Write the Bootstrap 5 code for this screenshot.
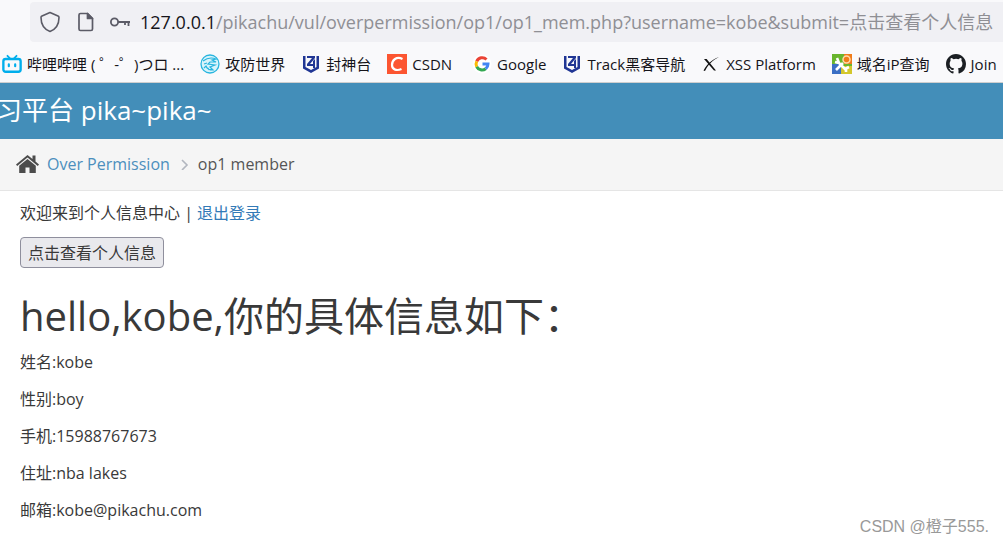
<!DOCTYPE html>
<html lang="zh-CN">
<head>
<meta charset="utf-8">
<meta name="viewport" content="width=device-width, initial-scale=1">
<title>op1 member</title>
<link rel="stylesheet" href="https://cdn.jsdelivr.net/npm/bootstrap@5.3.0/dist/css/bootstrap.min.css">
<style>
  body { font-family: "Open Sans", "Noto Sans CJK SC", sans-serif; font-size: 16px; line-height: 24px; color: #393939; background: #fff; }
  a { text-decoration: none; }
  svg { display: block; flex: none; }
  .browser { background: #f9f9fb; border-bottom: 1px solid #cfcfcf; overflow: hidden; color: #15141a; }
  .urlbar { background: #f0f0f4; height: 40px; margin: 2px 0 0 30px; padding-left: 8px; border-radius: 4px 0 0 4px; font-size: 18px; }
  .urlbar input { color: #8f8f94; background: none; min-width: 0; outline: 0; }
  .bookmarks { height: 40px; padding: 4px 0 0 2px; font-size: 15px; white-space: nowrap; }
  .bookmarks a { color: #15141a; display: flex; align-items: center; flex: none; gap: 5px; }
  .site-bar { background: #438eb9; height: 56px; overflow: hidden; padding-bottom: 2px; }
  .site-bar a { color: #fff; font-size: 26px; margin-left: -4px; }
  .crumbs { background: #f5f5f5; border-bottom: 1px solid #e5e5e5; height: 52px; padding-bottom: 2px; color: #555; }
  .crumbs a { color: #4c8fbd; }
  .content { padding: 10px 20px 0; }
  .content a { color: #337ab7; }
  .content p { margin-bottom: 13px; }
  .view-btn { display: block; margin-top: 12px; background: #e9e9ed; border: 1px solid #8f8f9d; border-radius: 4px; height: 31px; padding: 0 7px; color: #393939; }
  .hello { font-size: 40px; line-height: 44px; font-weight: 400; margin: 26px 0 12px; }
  .watermark { right: 14px; bottom: 4px; font-family: "Liberation Sans", "Noto Sans CJK SC", sans-serif; font-size: 16px; color: #999; }
</style>
</head>
<body class="min-vh-100 position-relative">
<header class="browser">
  <div class="urlbar d-flex align-items-center">
    <svg class="me-3" width="24" height="24" viewBox="0 0 24 24" fill="none" stroke="#5b5b66" stroke-width="1.6" stroke-linejoin="round"><path d="M12 2.5 20 6c.7.3 1 .7 1 1.400 0 6-2.500 11.500-9 14C5.500 18.900 3 13.400 3 7.400c0-.7.3-1.100 1-1.400z"/></svg>
    <svg width="16" height="20" viewBox="0 0 16 20" fill="none" stroke="#5b5b66" stroke-width="1.700" stroke-linejoin="round"><path d="M2.500 1.500H9.500L14.500 6.500v10.500a1.500 1.500 0 0 1-1.500 1.500H2.500A1.500 1.500 0 0 1 1 17V3a1.500 1.500 0 0 1 1.500-1.500z"/><path d="M9.500 1.500v5h5z" fill="#5b5b66"/></svg>
    <svg class="ms-3 me-2" width="22" height="20" viewBox="0 0 22 20" fill="none" stroke="#5b5b66" stroke-width="1.800"><circle cx="4.500" cy="10" r="3.600"/><path d="M8 10H20M15 10v3M18.500 10v4"/></svg>
    <label for="url">&#8203;127.0.0.1</label>
    <input class="border-0 p-0 flex-grow-1" id="url" type="text" value="/pikachu/vul/overpermission/op1/op1_mem.php?username=kobe&amp;submit=点击查看个人信息">
  </div>
  <nav class="bookmarks d-flex align-items-center gap-3" aria-label="Bookmarks">
    <a href="#"><svg width="20" height="20" viewBox="0 0 22 22" fill="none" stroke="#00aeec" stroke-linecap="round"><path d="m6 2 3 3M16 2l-3 3" stroke-width="2"/><rect x="1.500" y="5.500" width="19" height="14" rx="2.500" stroke-width="2.600"/><path d="M7.500 11.500v2M14.500 11.500v2" stroke-width="2.400"/></svg>哔哩哔哩 ( ゜-゜)つロ ...</a>
    <a href="#"><svg width="20" height="20" viewBox="0 0 20 20"><circle cx="10" cy="10" r="9" fill="#d8f4fb" stroke="#28b5df" stroke-width="1.300"/><path d="M3 7c4-3 8-4 13-2l-4 1 4 2-6 0-2 2 7 1-5 2 3 3c-4 0-6-1-7-4L4 14M4 10l3-1M9 16l-1-2" fill="none" stroke="#28b5df" stroke-width="1.200"/></svg>攻防世界</a>
    <a href="#"><svg width="20" height="20" viewBox="-1 -1 20 20"><path d="M1 1h2.500v11L9 15l5.500-3V1H17v12.500L9 18l-8-4.500zM5 1h8v2L8 9h3V6l2-2v9h-2v-2H5V9l5-6H5z" fill="#203694"/></svg>封神台</a>
    <a href="#"><svg width="20" height="20" viewBox="0 0 20 20"><path fill="#fc5531" d="M0 0h20v20H0z"/><path d="M15.500 5C9.500 2 5 6 5 11c0 5 5 6 9.500 4" fill="none" stroke="#fff" stroke-width="2.200"/></svg>CSDN</a>
    <a class="ms-1" href="#"><svg width="20" height="20" viewBox="0 0 20 20" fill="none" stroke-width="3"><circle cx="10" cy="10" r="9.500" fill="#fff"/><path d="M14.500 5.500A6 6 0 0 0 4.700 7.300" stroke="#ea4335"/><path d="M4.700 7.300a6 6 0 0 0 0 5.400" stroke="#fbbc05"/><path d="M4.700 12.700a6 6 0 0 0 9 2" stroke="#34a853"/><path d="M13.700 14.700A6 6 0 0 0 16 10h-5.500" stroke="#4285f4"/></svg>Google</a>
    <a href="#"><svg width="20" height="20" viewBox="-1 -1 20 20"><path d="M1 1h2.500v11L9 15l5.500-3V1H17v12.500L9 18l-8-4.500zM5 1h8v2L8 9h3V6l2-2v9h-2v-2H5V9l5-6H5z" fill="#203694"/></svg>Track黑客导航</a>
    <a href="#"><svg width="20" height="20" viewBox="0 0 20 20" fill="#111"><path d="M18 3C12 6 7 10.500 4 17l-1.500-.5C6 10 11 5.500 18 3z"/><path d="M3 5h2.600L15 16.500h-2z"/></svg>XSS Platform</a>
    <a href="#"><svg width="20" height="20" viewBox="0 0 20 20"><path fill="#69b52d" d="M0 0h20v20H0z"/><path fill="#f07c1a" d="M12 0h8v10h-8z"/><path fill="#3b6fc4" d="M0 10h9v10H0z"/><path fill="#d3c72c" d="M9 12h11v8H9z"/><path d="m5 4 2 5 7 7M3 8l4 1M17 13l-4 2M14 18l0-3M4 16l7-7" fill="none" stroke="#fff" stroke-width="2.600"/><circle cx="14.500" cy="5.500" r="3.500" fill="#f07c1a" stroke="#ffd9a8" stroke-width="1.500"/></svg>域名iP查询</a>
    <a href="#"><svg width="20" height="20" viewBox="0 0 16 16"><path fill="#1b1f23" d="M8 0C3.580 0 0 3.580 0 8c0 3.540 2.290 6.530 5.470 7.590.4.07.55-.17.55-.38 0-.19-.01-.82-.01-1.490-2.010.37-2.530-.49-2.690-.94-.09-.23-.48-.94-.82-1.130-.28-.15-.68-.52-.01-.53.63-.01 1.080.58 1.230.82.72 1.210 1.870.87 2.330.66.07-.52.28-.87.51-1.070-1.780-.2-3.640-.89-3.640-3.950 0-.87.31-1.590.82-2.150-.08-.2-.36-1.020.08-2.120 0 0 .67-.21 2.200.82a7.600 7.600 0 0 1 4 0c1.530-1.040 2.200-.82 2.200-.82.44 1.100.16 1.920.08 2.120.51.56.82 1.270.82 2.150 0 3.070-1.870 3.750-3.650 3.950.29.25.54.73.54 1.480 0 1.070-.01 1.930-.01 2.200 0 .21.15.46.55.38A8.010 8.010 0 0 0 16 8c0-4.420-3.580-8-8-8z"/></svg>Join</a>
  </nav>
</header>
<div class="site-bar d-flex align-items-center"><a href="#">习平台 pika~pika~</a></div>
<nav class="crumbs d-flex align-items-center px-3" aria-label="Breadcrumb">
  <svg width="23" height="20" viewBox="0 0 23 20" fill="#4c4c4c"><path d="M11.500 1 0 10.500l1.200 1.400L11.500 3.400l10.300 8.500 1.200-1.400-3.500-2.900V1.500h-3v3.600z"/><path d="m11.500 5-8.300 6.800V19h6.300v-5.500h4V19h6.300v-7.200z"/></svg>
  <a class="ms-2" href="#">Over Permission</a>
  <svg class="mx-2" width="12" height="12" viewBox="0 0 12 12" fill="none" stroke="#b2b6bf" stroke-width="1.600"><path d="m4 2 5 5-5 5"/></svg>
  <span>op1 member</span>
</nav>
<main class="content">
  <div>欢迎来到个人信息中心 | <a href="#">退出登录</a></div>
  <button class="view-btn" type="button">点击查看个人信息</button>
  <h1 class="hello">hello,kobe,你的具体信息如下：</h1>
  <p>姓名:kobe</p>
  <p>性别:boy</p>
  <p>手机:15988767673</p>
  <p>住址:nba lakes</p>
  <p class="mb-0">邮箱:kobe@pikachu.com</p>
</main>
<div class="watermark position-absolute">CSDN @橙子555.</div>
<script src="https://cdn.jsdelivr.net/npm/bootstrap@5.3.0/dist/js/bootstrap.bundle.min.js"></script>
</body>
</html>
